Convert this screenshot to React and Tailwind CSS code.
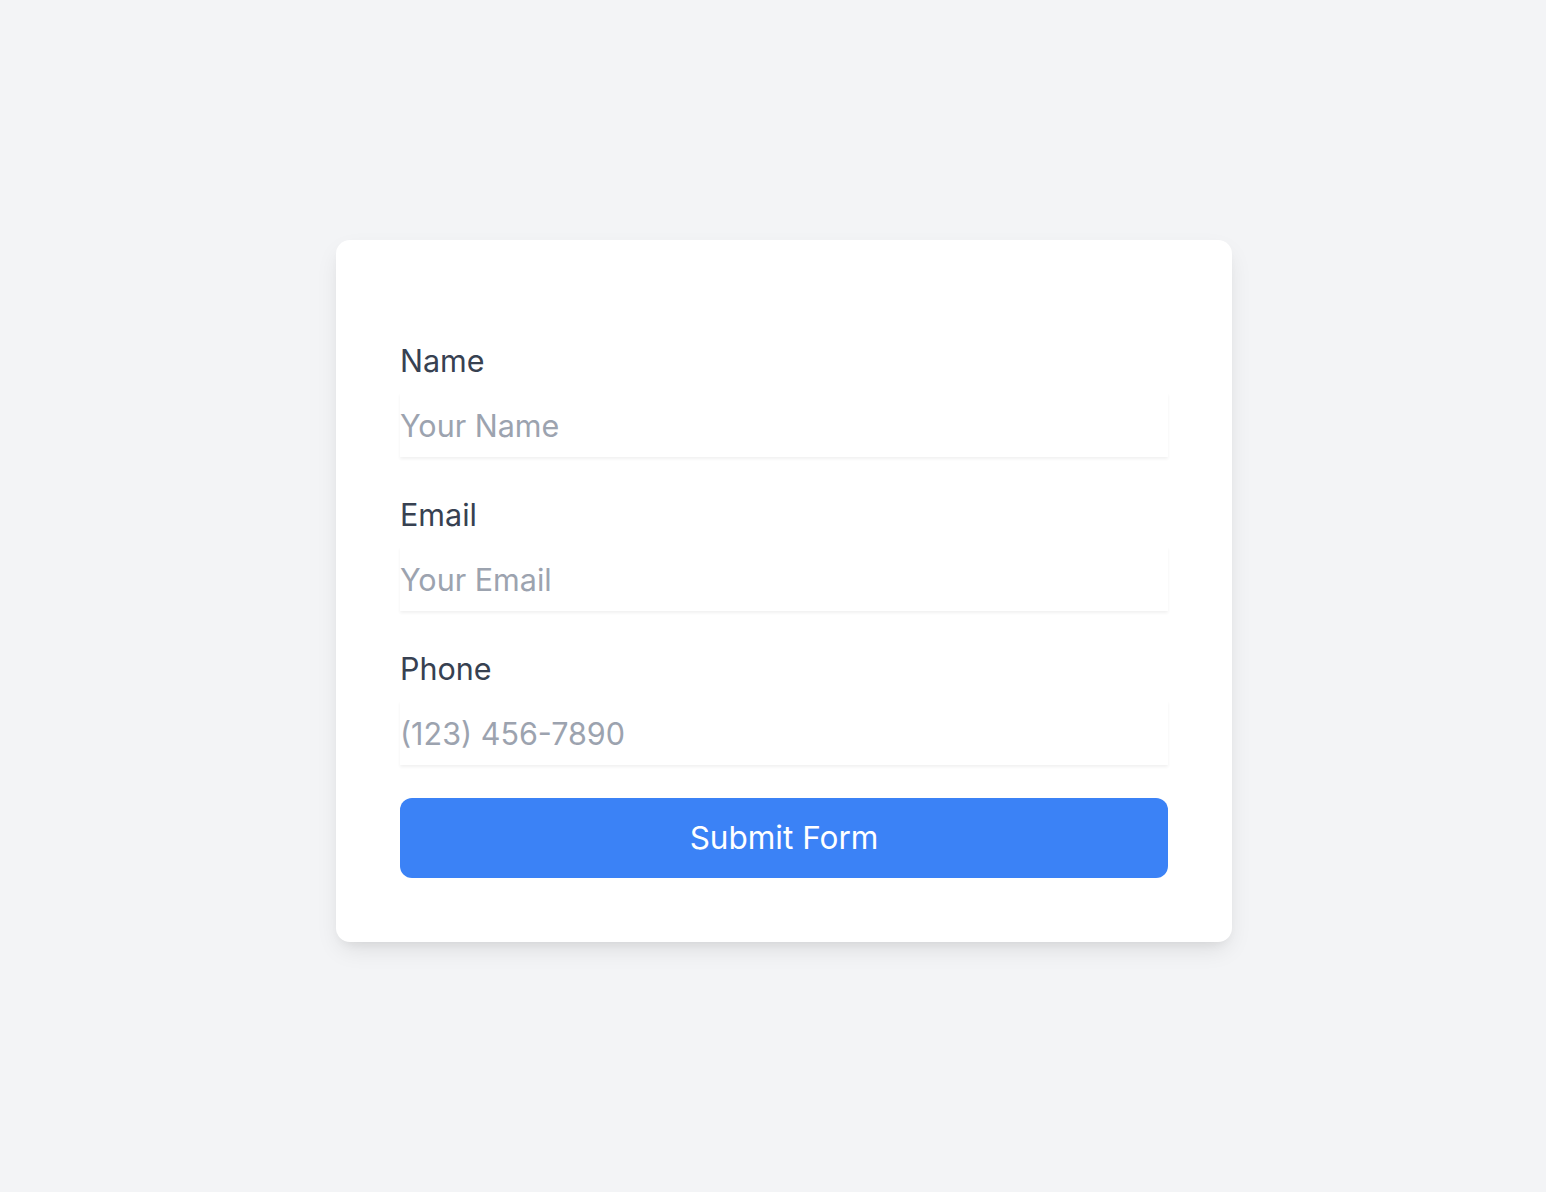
import React, { useState } from 'react';

const Field = ({ label, id, type = 'text', placeholder, value, onChange }) => (
    <div>
        <label htmlFor={id} className="block text-[30.5px] leading-[48px] text-[#374151] mb-2">{label}</label>
        <input
            id={id}
            type={type}
            placeholder={placeholder}
            value={value}
            onChange={onChange}
            className="block w-full h-[64px] bg-white text-[30.5px] text-[#374151] placeholder:text-[#9ca3af] outline-none shadow-[0_2px_3px_rgba(0,0,0,0.06)]"
        />
    </div>
);

export default function App() {
    const [data, setData] = useState({ name: '', email: '', phone: '' });

    const update = (key) => (e) => setData({ ...data, [key]: e.target.value });

    return (
        <div className="min-h-screen bg-[#f3f4f6] flex justify-center pt-[240px] pl-[22px] font-['Inter',sans-serif]">
            <form
                onSubmit={e => e.preventDefault()}
                className="w-[896px] h-[702px] bg-white rounded-[14px] px-16 pt-[97px] pb-16 shadow-[0_10px_24px_-4px_rgba(0,0,0,0.1),0_6px_12px_-6px_rgba(0,0,0,0.08)] flex flex-col"
            >
                <div className="flex flex-col gap-[34px]">
                    <Field label="Name" id="name" placeholder="Your Name" value={data.name} onChange={update('name')} />
                    <Field label="Email" id="email" type="email" placeholder="Your Email" value={data.email} onChange={update('email')} />
                    <Field label="Phone" id="phone" type="tel" placeholder="(123) 456-7890" value={data.phone} onChange={update('phone')} />
                </div>
                <button
                    type="submit"
                    className="mt-[33px] h-[80px] w-full rounded-[12px] bg-[#3b82f6] text-white text-[31.5px]"
                >
                    Submit Form
                </button>
            </form>
        </div>
    );
}
